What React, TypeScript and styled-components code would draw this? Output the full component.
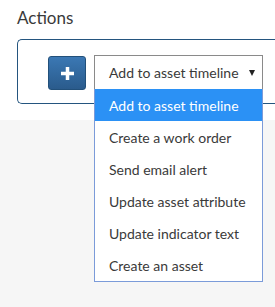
import React from "react";
import styled, { createGlobalStyle } from "styled-components";

const Global = createGlobalStyle`
  html, body { margin: 0; padding: 0; background: #f6f6f6; }
  body { font-family: Lato, "Open Sans", sans-serif; color: #3a3a3a; }
`;

const Page = styled.div`
  min-height: 100vh;
  display: flex;
  flex-direction: column;
`;

const Top = styled.section`
  background: #ffffff;
  height: 120px;
  flex: none;
  padding: 0 0 0 17px;
  box-sizing: border-box;
  position: relative;
  z-index: 1;
`;

const Rest = styled.div`
  flex: 1;
  background: #f6f6f6;
`;

const Title = styled.h2`
  margin: 0;
  padding-top: 9px;
  height: 30px;
  box-sizing: border-box;
  font-size: 17px;
  font-weight: 400;
  line-height: 18px;
  color: #3a3a3a;
`;

const Card = styled.div`
  height: 65px;
  box-sizing: border-box;
  border: 1px solid #24557f;
  border-right: none;
  border-radius: 5px 0 0 5px;
  margin-top: 9px;
  padding: 15px 0 0 30px;
  display: flex;
  align-items: flex-start;
  gap: 8px;
`;

const AddButton = styled.button`
  width: 38px;
  height: 34px;
  margin-top: 1px;
  border: 1px solid #22507a;
  border-radius: 3px;
  background: linear-gradient(#3b78b4, #2a5b8c);
  color: #fff;
  display: flex;
  align-items: center;
  justify-content: center;
  padding: 0;
`;

const SelectWrap = styled.div`
  position: relative;
  width: 169px;
`;

const SelectBox = styled.div`
  height: 34px;
  box-sizing: border-box;
  border: 1px solid #8a8a8a;
  border-bottom: none;
  background: #fff;
  display: flex;
  align-items: center;
  padding: 0 7px 0 14px;
  font-size: 14px;
  color: #3a3a3a;
`;

const SelectText = styled.span`
  flex: 1;
`;

const Arrow = styled.span`
  width: 0;
  height: 0;
  border-left: 3px solid transparent;
  border-right: 3px solid transparent;
  border-top: 6px solid #222;
  margin-top: 1px;
`;

const Menu = styled.ul`
  position: absolute;
  left: 0;
  top: 34px;
  z-index: 2;
  width: 169px;
  box-sizing: border-box;
  margin: 0;
  padding: 0;
  list-style: none;
  background: #fff;
  border: 1px solid #7b9bd9;
  border-top: none;
`;

const Item = styled.li<{ $active?: boolean }>`
  height: 32px;
  display: flex;
  align-items: center;
  padding-left: 14px;
  font-size: 14px;
  background: ${(p) => (p.$active ? "#2b91f5" : "#fff")};
  color: ${(p) => (p.$active ? "#fff" : "#3a3a3a")};
`;

const items = [
  "Add to asset timeline",
  "Create a work order",
  "Send email alert",
  "Update asset attribute",
  "Update indicator text",
  "Create an asset",
];

export default function App() {
  return (
    <>
      <Global />
      <Page>
        <Top>
          <Title>Actions</Title>
          <Card>
            <AddButton aria-label="Add">
              <svg width="13" height="13" viewBox="0 0 13 13">
                <path d="M6.5 0v13M0 6.5h13" stroke="#fff" strokeWidth="3.5" />
              </svg>
            </AddButton>
            <SelectWrap>
              <SelectBox>
                <SelectText>Add to asset timeline</SelectText>
                <Arrow />
              </SelectBox>
              <Menu>
                {items.map((t, i) => (
                  <Item key={t} $active={i === 0}>
                    {t}
                  </Item>
                ))}
              </Menu>
            </SelectWrap>
          </Card>
        </Top>
        <Rest />
      </Page>
    </>
  );
}
